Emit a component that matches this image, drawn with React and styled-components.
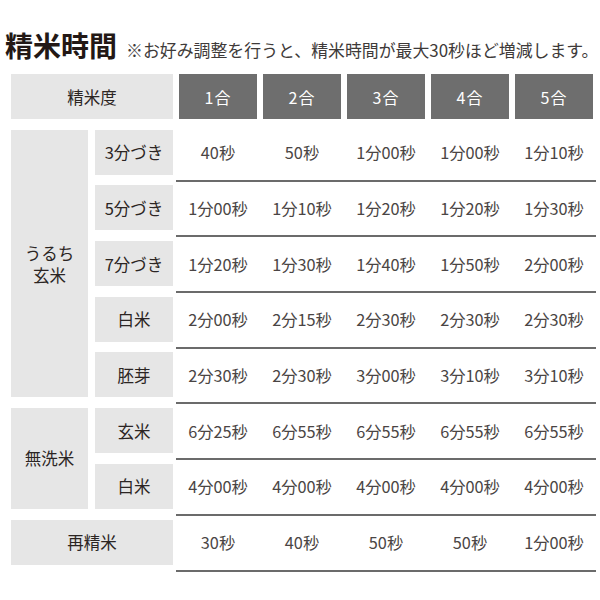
import React from 'react';
import styled, { createGlobalStyle } from 'styled-components';

const GlobalStyle = createGlobalStyle`
  body {
    margin: 0;
    background: #ffffff;
    font-family: "Noto Sans CJK JP", "Noto Sans", sans-serif;
  }
`;

const Page = styled.div`
  width: 600px;
  height: 600px;
  overflow: hidden;
`;

const TitleRow = styled.div`
  height: 74px;
  box-sizing: border-box;
  display: flex;
  align-items: flex-end;
  padding: 0 0 15px 5px;
  gap: 9px;
`;

const Title = styled.h1`
  margin: 0;
  flex-shrink: 0;
  white-space: nowrap;
  font-size: 28px;
  line-height: 1;
  font-weight: 700;
  color: #231815;
`;

const Note = styled.span`
  flex-shrink: 0;
  font-size: 16.9px;
  line-height: 1;
  color: #3e3a39;
  white-space: nowrap;
`;

const Grid = styled.div`
  margin-left: 11px;
  display: grid;
  grid-template-columns: 84px 81px repeat(5, 84px);
  grid-auto-rows: 55.7px;
`;

const Label = styled.div`
  grid-column: ${p => p.$col};
  grid-row: ${p => p.$row || 'auto'};
  margin: 0 ${p => p.$gap}px 10.7px 0;
  background: #e6e6e6;
  display: flex;
  flex-direction: column;
  align-items: center;
  justify-content: center;
  font-size: 16.5px;
  line-height: 22px;
  color: #2b2523;
`;

const HeadCell = styled.div`
  margin: 0 3px 10.7px;
  background: #6e6e6e;
  color: #ffffff;
  display: flex;
  align-items: center;
  justify-content: center;
  font-size: 16px;
  letter-spacing: 1px;
`;

const DataCell = styled.div`
  align-self: start;
  height: 45px;
  padding-bottom: 5px;
  border-bottom: 2px solid #6b6b6b;
  display: flex;
  align-items: center;
  justify-content: center;
  font-size: 16.3px;
  color: #4a4544;
`;

const groups = [
  {
    label: ['うるち', '玄米'],
    rows: [
      ['3分づき', ['40秒', '50秒', '1分00秒', '1分00秒', '1分10秒']],
      ['5分づき', ['1分00秒', '1分10秒', '1分20秒', '1分20秒', '1分30秒']],
      ['7分づき', ['1分20秒', '1分30秒', '1分40秒', '1分50秒', '2分00秒']],
      ['白米', ['2分00秒', '2分15秒', '2分30秒', '2分30秒', '2分30秒']],
      ['胚芽', ['2分30秒', '2分30秒', '3分00秒', '3分10秒', '3分10秒']],
    ],
  },
  {
    label: ['無洗米'],
    rows: [
      ['玄米', ['6分25秒', '6分55秒', '6分55秒', '6分55秒', '6分55秒']],
      ['白米', ['4分00秒', '4分00秒', '4分00秒', '4分00秒', '4分00秒']],
    ],
  },
];

const repolish = ['30秒', '40秒', '50秒', '50秒', '1分00秒'];
const amounts = ['1合', '2合', '3合', '4合', '5合'];

const App = () => {
  let row = 2;

  return (
    <Page>
      <GlobalStyle />
      <TitleRow>
        <Title>精米時間</Title>
        <Note>※お好み調整を行うと、精米時間が最大30秒ほど増減します。</Note>
      </TitleRow>
      <Grid>
        <Label $col="1 / span 2" $gap={3}>精米度</Label>
        {amounts.map(a => <HeadCell key={a}>{a}</HeadCell>)}

        {groups.map(g => {
          const start = row;
          row += g.rows.length;
          return (
            <React.Fragment key={g.label.join('')}>
              <Label $col="1" $row={`${start} / span ${g.rows.length}`} $gap={7}>
                {g.label.map(l => <span key={l}>{l}</span>)}
              </Label>
              {g.rows.map(([name, times], i) => (
                <React.Fragment key={name + i}>
                  <Label $col="2" $row={start + i} $gap={3}>{name}</Label>
                  {times.map((t, j) => <DataCell key={j}>{t}</DataCell>)}
                </React.Fragment>
              ))}
            </React.Fragment>
          );
        })}

        <Label $col="1 / span 2" $gap={3}>再精米</Label>
        {repolish.map((t, j) => <DataCell key={j}>{t}</DataCell>)}
      </Grid>
    </Page>
  );
};

export default App;
